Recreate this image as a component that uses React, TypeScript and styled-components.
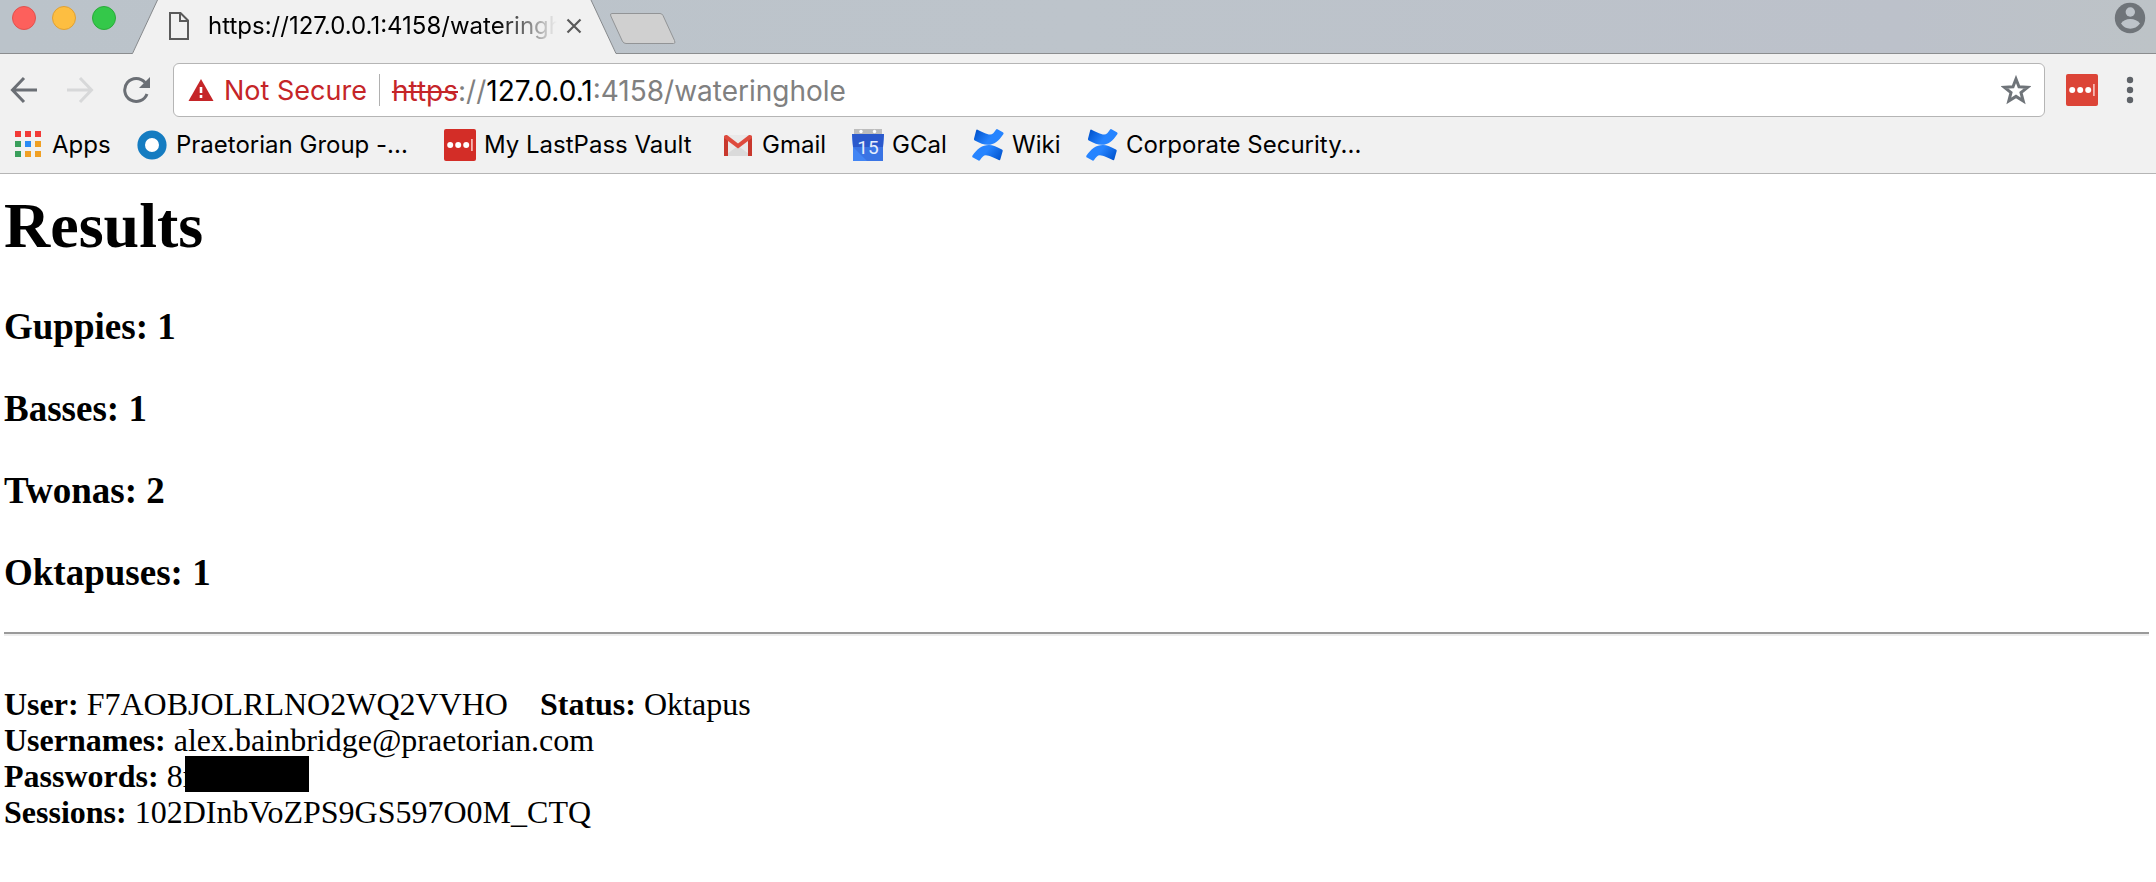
import React from 'react';
import styled, { createGlobalStyle } from 'styled-components';

const Global = createGlobalStyle`
  *, *::before, *::after { box-sizing: border-box; }
  body { margin: 0; background: #fff; color: #000; }
`;

const Browser = styled.div`
  font-family: Inter, "Liberation Sans", sans-serif;
`;

const TabStrip = styled.header`
  display: flex;
  align-items: flex-start;
  height: 54px;
  background: linear-gradient(90deg, #bbc3ca, #bdc4cb 50%, #bcc1ca 88%, #bdc3c7);
  box-shadow: inset 0 -1px #8b8d8f;
`;

const WindowControls = styled.div`
  display: flex;
  gap: 16px;
  padding: 6px 0 0 12px;
`;

const WindowButton = styled.button<{ $fill: string; $edge: string }>`
  width: 24px;
  height: 24px;
  padding: 0;
  border: 1px solid ${(p) => p.$edge};
  border-radius: 50%;
  background: ${(p) => p.$fill};
`;

const Tab = styled.div`
  position: relative;
  display: flex;
  align-items: center;
  width: 486px;
  height: 54px;
  margin-left: 15px;
  padding: 0 35px 16px 38px;
`;

const TabShape = styled.svg`
  position: absolute;
  inset: 0;
  width: 100%;
  height: 100%;
`;

const TabIcon = styled.svg`
  position: relative;
  flex: none;
  width: 20px;
  height: 28px;
  margin-top: 14px;
`;

const TabTitle = styled.span`
  position: relative;
  flex: 1;
  margin: 14px 9px 0 19px;
  overflow: hidden;
  white-space: nowrap;
  font-size: 24px;
  line-height: 30px;
  mask-image: linear-gradient(90deg, #000 calc(100% - 60px), transparent);
`;

const IconButton = styled.button`
  position: relative;
  display: flex;
  flex: none;
  padding: 0;
  border: 0;
  background: none;
`;

const CloseButton = styled(IconButton)`
  margin-top: 14px;
`;

const NewTab = styled(IconButton)`
  margin: 12px auto 0 -8px;
`;

const Profile = styled(IconButton)`
  margin: 2px 10px 0 0;
`;

const Toolbar = styled.nav`
  display: flex;
  align-items: center;
  padding: 9px 19px 0 10px;
  background: #f1f1f1;
`;

const NavButtons = styled.div`
  display: flex;
  gap: 28px;
  padding-right: 23px;
`;

const Omnibox = styled.div`
  display: flex;
  flex: 1;
  align-items: center;
  height: 54px;
  padding: 0 13px 0 14px;
  border: 1px solid #b5b5b5;
  border-radius: 6px;
  background: #fff;
  font-size: 28px;
  line-height: 34px;
  white-space: nowrap;
`;

const Security = styled.span`
  display: flex;
  align-items: center;
  gap: 10px;
  padding-right: 12px;
  color: #c52528;
  font-size: 27px;
`;

const SecurityLabel = styled.span`
  padding-top: 2px;
`;

const Divider = styled.span`
  width: 1px;
  height: 32px;
  margin-right: 12px;
  background: #b0b0b0;
`;

const Url = styled.span`
  flex: 1;
  padding-top: 2px;
  color: #808080;
`;

const Scheme = styled.s`
  color: #c52528;
  text-decoration-thickness: 2px;
`;

const Host = styled.span`
  color: #000;
`;

const Extensions = styled.div`
  display: flex;
  align-items: center;
  gap: 25px;
  padding-left: 21px;
`;

const Bookmarks = styled.nav`
  display: flex;
  align-items: center;
  height: 57px;
  padding-left: 12px;
  border-bottom: 1px solid #b5b5b5;
  background: #f1f1f1;
  font-size: 24px;
  line-height: 32px;
`;

const Bookmark = styled.a<{ $width: number }>`
  display: flex;
  flex: none;
  align-items: center;
  gap: 8px;
  width: ${(p) => p.$width}px;
  color: #000;
  text-decoration: none;
  white-space: nowrap;

  svg { flex: none; }
`;

const Page = styled.main`
  padding: 16px 7px 40px 4px;
  font-family: "Liberation Serif", "Times New Roman", serif;
  font-size: 32px;
  line-height: 36px;
`;

const Title = styled.h1`
  margin: 0 0 44px;
  font-size: 64px;
  line-height: 72px;
`;

const Count = styled.h3`
  margin: 0 0 40px;
  font-size: 37px;
  line-height: 42px;
`;

const Rule = styled.hr`
  height: 4px;
  margin: -2px 0 50px;
  border: 0;
  border-top: 2px solid #9a9a9a;
  background: #eee;
`;

const Record = styled.div`
  white-space: pre;
`;

const Redacted = styled.span`
  display: inline-block;
  width: 124px;
  height: 36px;
  margin: -2px 0 0 -8px;
  background: #000;
  vertical-align: top;
`;

const LastPass = ({ fill }: { fill: string }) => (
  <svg width="32" height="32" viewBox="0 0 32 32">
    <rect width="32" height="32" rx="2" fill={fill} />
    <circle cx="6.2" cy="16" r="3" fill="#fff" />
    <circle cx="14.2" cy="16" r="3" fill="#fff" />
    <circle cx="22.2" cy="16" r="3" fill="#fff" />
    <rect x="27" y="10" width="1.8" height="12" fill="#f6b5b0" />
  </svg>
);

const Confluence = ({ id }: { id: string }) => (
  <svg width="32" height="32" viewBox="0 0 32 32">
    <defs>
      <linearGradient id={`${id}a`} x1="0" y1="0.2" x2="1" y2="0.6">
        <stop offset="0" stopColor="#0052cc" />
        <stop offset="0.6" stopColor="#2684ff" />
      </linearGradient>
      <linearGradient id={`${id}b`} x1="1" y1="0.8" x2="0" y2="0.4">
        <stop offset="0" stopColor="#0052cc" />
        <stop offset="0.6" stopColor="#2684ff" />
      </linearGradient>
    </defs>
    <path fill={`url(#${id}a)`} d="M4.2 1.2 2 9.8q-.2 1.1.8 1.6c5 2.5 9 4.4 13 4.4 6.600 0 11-4 15.500-10.600.5-.8.3-1.500-.5-2L25.500.3q-.8-.5-1.400.3c-2 3-3.500 5-6 5C15 5.600 9 2.600 5.600.8q-1-.5-1.400.4z" />
    <path fill={`url(#${id}b)`} d="M28.300 30.600 30.700 22q.2-1.100-.8-1.600c-5-2.500-9-4.400-13-4.400C10.300 16 5 20 .5 26.600c-.5.8-.3 1.500.5 2l5.500 3q.8.5 1.400-.3c2-3 3.500-5 6-5 3.100 0 9.100 3 12.800 4.700q1.200.5 1.600-.4z" />
  </svg>
);

const appColors = ['#f23a37', '#f23a37', '#f23a37', '#3a9f5c', '#2a8cf5', '#f0a024', '#3a9f5c', '#f0a024', '#f0a024'];

const counts: [string, number][] = [['Guppies', 1], ['Basses', 1], ['Twonas', 2], ['Oktapuses', 1]];

export default function App() {
  return (
    <Browser>
      <Global />
      <TabStrip>
        <WindowControls>
          <WindowButton aria-label="Close window" $fill="#fd605c" $edge="#e0524e" />
          <WindowButton aria-label="Minimize window" $fill="#fdbe41" $edge="#dfa035" />
          <WindowButton aria-label="Zoom window" $fill="#34c84a" $edge="#2bab3a" />
        </WindowControls>
        <Tab>
          <TabShape viewBox="0 0 486 54" preserveAspectRatio="none">
            <path d="M1 54 1.500 53 26.500 0H460L485 53 485.500 54z" fill="#f1f1f1" />
            <path d="M0 53.500H1.500L26.500 0M460 0 485 53.500H486" fill="none" stroke="#85888b" />
          </TabShape>
          <TabIcon viewBox="0 0 20 28">
            <path d="M1 1H11.500L19 8.500V27H1zM11 1V9H19" fill="none" stroke="#5a5a5a" strokeWidth="2" />
          </TabIcon>
          <TabTitle>https://127.0.0.1:4158/wateringhole</TabTitle>
          <CloseButton aria-label="Close tab">
            <svg width="16" height="16" viewBox="0 0 16 16">
              <path d="M1.500 1.500 14.500 14.500M14.500 1.500 1.500 14.500" stroke="#5a5a5a" strokeWidth="2.200" />
            </svg>
          </CloseButton>
        </Tab>
        <NewTab aria-label="New tab">
          <svg width="68" height="32" viewBox="0 0 68 32">
            <path d="M3 1.500H51Q53 1.500 54 3.500L65.500 28.500Q67 31.500 64.500 31.500H17Q14.500 31.500 13.300 29L1.800 4Q.6 1.500 3 1.500z" fill="#d0d0d0" stroke="#929496" />
          </svg>
        </NewTab>
        <Profile aria-label="Profile">
          <svg width="32" height="32" viewBox="0 0 32 32">
            <circle cx="16" cy="16" r="15.200" fill="#6f7479" />
            <circle cx="16.300" cy="10" r="4.700" fill="#bdc3c9" />
            <path d="M7 21.500Q10 17 16.300 17T26 21.500Q22 26.700 16.300 26.700T7 21.500z" fill="#bdc3c9" />
          </svg>
        </Profile>
      </TabStrip>

      <Toolbar>
        <NavButtons>
          <IconButton aria-label="Back">
            <svg width="28" height="28" viewBox="0 0 28 28">
              <path d="M27 14H3M14 2 2.500 14 14 26" fill="none" stroke="#6b6f75" strokeWidth="3" />
            </svg>
          </IconButton>
          <IconButton aria-label="Forward">
            <svg width="28" height="28" viewBox="0 0 28 28">
              <path d="M1 14H25M14 2 25.500 14 14 26" fill="none" stroke="#d7d8d9" strokeWidth="3" />
            </svg>
          </IconButton>
          <IconButton aria-label="Reload">
            <svg width="28" height="28" viewBox="0 0 28 28">
              <path d="M23 6.500A11.500 11.500 0 1 0 25 18" fill="none" stroke="#6b6f75" strokeWidth="3" />
              <path d="M28 1V12H17z" fill="#6b6f75" />
            </svg>
          </IconButton>
        </NavButtons>
        <Omnibox>
          <Security>
            <svg width="26" height="22" viewBox="0 0 26 22">
              <path d="M13 0 25.500 22H.5z" fill="#c52528" />
              <path d="M13 8V14M13 16V19" stroke="#fff" strokeWidth="2.600" />
            </svg>
            <SecurityLabel>Not Secure</SecurityLabel>
          </Security>
          <Divider />
          <Url><Scheme>https</Scheme>://<Host>127.0.0.1</Host>:4158/wateringhole</Url>
          <IconButton aria-label="Bookmark this page">
            <svg width="30" height="30" viewBox="0 0 30 30">
              <path d="M15 4 18 11.800 26.500 12.300 20 17.600 22.200 26 15 21.400 7.800 26 10 17.600 3.500 12.300 12 11.800z" fill="none" stroke="#6f7479" strokeWidth="3" />
            </svg>
          </IconButton>
        </Omnibox>
        <Extensions>
          <IconButton aria-label="LastPass"><LastPass fill="#dc4437" /></IconButton>
          <IconButton aria-label="Menu">
            <svg width="14" height="28" viewBox="0 0 14 28">
              <g fill="#5f6368"><circle cx="7" cy="4" r="3.200" /><circle cx="7" cy="14" r="3.200" /><circle cx="7" cy="24" r="3.200" /></g>
            </svg>
          </IconButton>
        </Extensions>
      </Toolbar>

      <Bookmarks>
        <Bookmark href="#" $width={124}>
          <svg width="32" height="32" viewBox="0 0 32 32">
            {appColors.map((c, i) => (
              <rect key={i} x={3 + (i % 3) * 10} y={2 + Math.floor(i / 3) * 10} width="6" height="6" fill={c} />
            ))}
          </svg>
          Apps
        </Bookmark>
        <Bookmark href="#" $width={308}>
          <svg width="32" height="32" viewBox="0 0 32 32"><circle cx="16" cy="16" r="10.800" fill="#fff" stroke="#157cc1" strokeWidth="7.600" /></svg>
          Praetorian Group -...
        </Bookmark>
        <Bookmark href="#" $width={278}><LastPass fill="#d32d27" />My LastPass Vault</Bookmark>
        <Bookmark href="#" $width={130}>
          <svg width="32" height="32" viewBox="0 0 32 32">
            <path d="M2 6H30V27H2z" fill="#e9e9e9" />
            <path d="M2 27 16 17 30 27z" fill="#dadada" />
            <path d="M2 7V27H6V10zM30 7V27H26V10z" fill="#c8382d" />
            <path d="M2 8Q2 6 4 6H5L16 14.500 27 6H28Q30 6 30 8V9L16 19.500 2 9z" fill="#de4b3e" />
          </svg>
          Gmail
        </Bookmark>
        <Bookmark href="#" $width={120}>
          <svg width="32" height="32" viewBox="0 0 32 32">
            <path d="M2 0H30V6H2z" fill="#bdbdbd" />
            <circle cx="9" cy="2.500" r="1.700" fill="#fff" /><circle cx="22.500" cy="2.500" r="1.700" fill="#fff" />
            <path d="M0 5H32L31 18V32H1V18z" fill="#4285f4" />
            <path d="M0 5H32L31 18H1z" fill="#2b59cc" />
            <path d="M1 18 6 23 15 32H31V18z" fill="#3a74e4" />
            <text x="16" y="25" textAnchor="middle" fontFamily="Roboto, sans-serif" fontSize="19" fill="#e6eefc">15</text>
          </svg>
          GCal
        </Bookmark>
        <Bookmark href="#" $width={114}><Confluence id="wiki" />Wiki</Bookmark>
        <Bookmark href="#" $width={290}><Confluence id="corp" />Corporate Security...</Bookmark>
      </Bookmarks>

      <Page>
        <Title>Results</Title>
        {counts.map(([name, n]) => <Count key={name}>{name}: {n}</Count>)}
        <Rule />
        <Record><b>User:</b>{' F7AOBJOLRLNO2WQ2VVHO\u00a0\u00a0\u00a0 '}<b>Status:</b> Oktapus</Record>
        <Record><b>Usernames:</b> alex.bainbridge@praetorian.com</Record>
        <Record><b>Passwords:</b> 8r<Redacted /></Record>
        <Record><b>Sessions:</b> 102DInbVoZPS9GS597O0M_CTQ</Record>
      </Page>
    </Browser>
  );
}
